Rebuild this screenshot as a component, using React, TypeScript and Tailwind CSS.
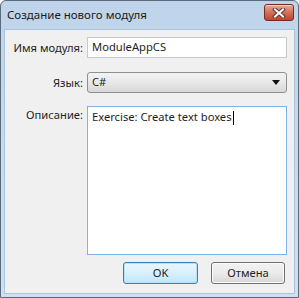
import React from 'react';

const font = { fontFamily: '"Noto Sans", "Open Sans", sans-serif' };

const CloseButton = () => (
  <button className="w-[30px] h-[17px] rounded-[3px] border border-[#7a2a1c] bg-gradient-to-b from-[#e8a999] via-[#d2705b] to-[#c0432b] flex items-center justify-center shadow-[inset_0_1px_0_rgba(255,255,255,0.5)]">
    <svg width="14" height="10" viewBox="0 0 14 10">
      <path d="M3 1.5 L11 8.5 M11 1.5 L3 8.5" stroke="#5b3a35" strokeWidth="4" strokeLinecap="square" />
      <path d="M3 1.5 L11 8.5 M11 1.5 L3 8.5" stroke="#ffffff" strokeWidth="2" strokeLinecap="square" />
    </svg>
  </button>
);

const App: React.FC = () => {
  return (
    <div className="w-[299px] h-[298px] overflow-hidden text-[11.2px] text-[#1e1e1e]" style={font}>
      <div className="w-full h-full flex flex-col rounded-t-[6px] border border-[#5c6b7c] bg-gradient-to-b from-[#bfd4ea] to-[#cfe0f2]">
        {/* title bar */}
        <div className="h-[28px] flex items-start justify-between pl-[6px] pr-[4px]">
          <span className="mt-[5px] text-[11.5px] text-[#1b1b1b]">Создание нового модуля</span>
          <div className="mt-[3px]"><CloseButton /></div>
        </div>
        {/* client area */}
        <div className="flex-1 mx-[3px] mb-[3px] border border-[#aac4de] bg-[#f0f0f0] flex flex-col">
          <div className="grid grid-cols-[78px_200px] gap-x-[4px] pt-[7px]">
            <span className="text-right mt-[3px]">Имя модуля:</span>
            <div className="h-[21px] border border-[#c5cad2] bg-white flex items-center pl-[4px]">ModuleAppCS</div>

            <span className="text-right mt-[17px]">Язык:</span>
            <div className="mt-[14px] h-[21px] rounded-[3px] border border-[#8e8f8f] bg-gradient-to-b from-[#f3f3f3] via-[#e8e8e8] to-[#d7d7d7] flex items-center justify-between pl-[4px] pr-[6px]">
              <span>C#</span>
              <svg width="8" height="5" viewBox="0 0 8 5"><path d="M0 0 H8 L4 5 Z" fill="#111" /></svg>
            </div>

            <span className="text-right mt-[14px]">Описание:</span>
            <div className="mt-[13px] h-[149px] border border-[#7eb4ea] bg-white pl-[4px] pt-[2px]">
              Exercise: Create text boxes<span className="inline-block w-px h-[14px] bg-black align-middle ml-[1px]" />
            </div>
          </div>
          <div className="flex justify-end gap-[13px] pr-[9px] mt-[7px]">
            <button className="w-[75px] h-[22px] rounded-[3px] border border-[#3c7fb1] bg-gradient-to-b from-[#eaf6fd] via-[#d9f0fc] to-[#bee6fd] shadow-[inset_0_0_0_1px_#b8e0f7]">OK</button>
            <button className="w-[74px] h-[22px] rounded-[3px] border border-[#707070] bg-gradient-to-b from-[#f2f2f2] via-[#ebebeb] to-[#d6d6d6] shadow-[inset_0_0_0_1px_#fbfbfb]">Отмена</button>
          </div>
        </div>
      </div>
    </div>
  );
};

export default App;
